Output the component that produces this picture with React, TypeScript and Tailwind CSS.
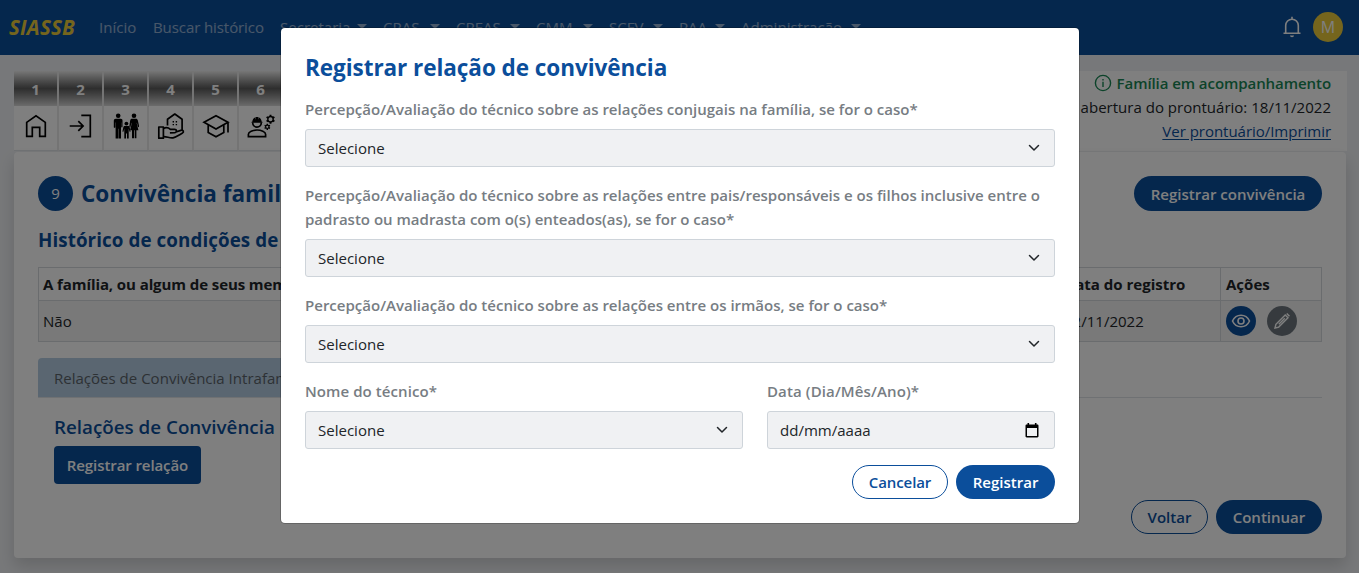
import type { ReactNode } from "react";

const navMenus = [
  { label: "Secretaria", width: "w-[103px]" },
  { label: "CRAS", width: "w-[73px]" },
  { label: "CREAS", width: "w-[80px]" },
  { label: "CMM", width: "w-[73px]" },
  { label: "SCFV", width: "w-[70px]" },
  { label: "PAA", width: "w-[62px]" },
  { label: "Administração", width: "w-[136px]" },
];

function HouseIcon() {
  return (
    <svg width="26" height="26" viewBox="0 0 26 26" fill="none" stroke="#000" strokeWidth="1.7">
      <path d="M3.7 9.4 13 2.9l9.3 6.500v14h-5.600v-9H9.300v9H3.700z" />
    </svg>
  );
}

function EnterIcon() {
  return (
    <svg width="26" height="26" viewBox="0 0 26 26" fill="none" stroke="#000" strokeWidth="1.7">
      <path d="M13.3 2.400h9v21.200h-9M1.700 13h13M10.300 8.200l4.800 4.800-4.800 4.800" />
    </svg>
  );
}

function FamilyIcon() {
  return (
    <svg width="26" height="26" viewBox="0 0 26 26" fill="#000">
      <circle cx="5.2" cy="2.8" r="2.3" />
      <circle cx="21" cy="2.8" r="2.3" />
      <circle cx="13.4" cy="10.6" r="1.9" />
      <path d="M2.8 5.8h5c1.1 0 1.7.8 1.7 1.8v6.2c0 .9-1.3.9-1.3 0V9.4h-.2v16H5.500v-9.600h-.4v9.600H2.600V9.400h-.3v4.800c0 .8-1.500.8-1.500 0V7.700c0-1.100.8-1.900 2-1.900z" />
      <path d="M19 5.800h4c1 0 1.500.6 1.800 1.500l1.400 6c.2.9-.9 1.200-1.200.4l-1.100-3.900-.2.200 1.700 7.300h-2v8h-1.700v-8h-.7v8H19v-8h-1.900L18.800 10l-.2-.2-1.100 4c-.3.9-1.300.500-1.200-.3l.9-6c.2-1.100.8-1.700 1.800-1.700z" />
      <path d="M11.700 13.100h3.500c.8 0 1.300.6 1.500 1.300l.8 3.800c.1.700-.8.9-1 .3l-.8-3v10h-1.700v-5h-1v5h-1.700v-10l-.8 3c-.2.600-1.100.4-1-.3l.8-3.800c.1-.7.700-1.300 1.400-1.300z" />
    </svg>
  );
}

function HandHouseIcon() {
  return (
    <svg width="28" height="28" viewBox="0 0 28 28" fill="none" stroke="#000" strokeWidth="1.7" strokeLinejoin="round">
      <path d="M10.500 13.500V7.200L17.800 2l7.300 5.200v11.300" />
      <path d="M1.800 15h4.600v11.200H1.800z" />
      <path d="M6.400 16.600c2.800-1.600 5-1 7 .8h4.200c2.400 0 2.600 3 .3 3.200l-5 .3M18.800 20l5-1.600c2.700-.7 3.600 1.800 1.400 2.900-3.200 1.800-6.200 3.900-9.200 4.500-3.400.500-6.100-1.300-9.600-1.100" />
      <path d="M15.600 9h1.400v1.400h-1.400zM18.700 9h1.400v1.400h-1.400zM15.600 11.900h1.400v1.400h-1.400zM18.700 11.900h1.400v1.400h-1.400z" fill="#000" stroke="none" />
    </svg>
  );
}

function GraduationIcon() {
  return (
    <svg width="28" height="28" viewBox="0 0 28 28" fill="none" stroke="#000" strokeWidth="1.7">
      <path d="M2 10.200 14 3.800l12 6.400-12 6.900zM26 10.200v10.300M6.200 12.800v7.600L14 24.800l7.800-4.400v-7.600" />
    </svg>
  );
}

function EngineerIcon() {
  return (
    <svg width="30" height="26" viewBox="0 0 30 26" fill="none" stroke="#000" strokeWidth="1.700">
      <path d="M2.400 23.600v-2.400c0-2.400 4.500-4.200 8.600-4.200s8.600 1.800 8.600 4.200v2.400z" />
      <path d="M6.700 9.500c0 6.200 8.600 6.200 8.600 0" />
      <path d="M5.600 9.800V8.700h.700c.1-2 1-3.500 2.600-4.300l.600 2.300V4h3v2.700l.600-2.300c1.600.8 2.500 2.300 2.600 4.300h.7v1.100z" fill="#000" stroke="none" />
      <circle cx="24.500" cy="6.200" r="2.700" strokeWidth="1.400" />
      <path d="M24.500 3.500V1.700M24.500 8.900v1.800M22.200 4.900l-1.600-.9M26.800 7.500l1.600.9M26.800 4.900l1.600-.9M22.200 7.500l-1.600.9" strokeWidth="1.900" />
      <circle cx="21.300" cy="13.800" r="1.700" strokeWidth="1.200" />
      <path d="M21.300 12.100v-1.400M21.300 15.500v1.400M19.800 12.900l-1.200-.6M22.800 14.700l1.200.6M22.800 12.900l1.200-.6M19.800 14.700l-1.200.6" strokeWidth="1.400" />
    </svg>
  );
}

const steps: { n: number; icon: ReactNode }[] = [
  { n: 1, icon: <HouseIcon /> },
  { n: 2, icon: <EnterIcon /> },
  { n: 3, icon: <FamilyIcon /> },
  { n: 4, icon: <HandHouseIcon /> },
  { n: 5, icon: <GraduationIcon /> },
  { n: 6, icon: <EngineerIcon /> },
];

function Chevron() {
  return (
    <svg width="16" height="12" viewBox="0 0 16 12" fill="none" stroke="#212529" strokeWidth="1.500" strokeLinecap="round" strokeLinejoin="round">
      <path d="m3.500 3.500 4.500 4.500 4.500-4.500" />
    </svg>
  );
}

function SelectBox() {
  return (
    <div className="flex h-[38px] items-center justify-between rounded-[3px] border border-[#ced4da] bg-[#f0f1f3] pl-3 pr-3 text-[#212529]">
      <span>Selecione</span>
      <Chevron />
    </div>
  );
}

function Field({ label, children }: { label: ReactNode; children: ReactNode }) {
  return (
    <div className="mb-4">
      <div className="mb-2 whitespace-nowrap font-semibold tracking-[-0.01px] text-[#777d83]">{label}</div>
      {children}
    </div>
  );
}

function Navbar() {
  return (
    <nav className="flex h-[55px] items-center bg-[#0b4e9b] pb-0.5 pl-[9px] pr-4 text-white/55">
      <span className="w-[90px] text-[20.500px] font-bold italic tracking-[0.2px] text-[#eacb3b]">SIASSB</span>
      <span className="w-[54px]">Início</span>
      <span className="w-[127px] whitespace-nowrap tracking-[-0.1px]">Buscar histórico</span>
      {navMenus.map((m) => (
        <span key={m.label} className={"flex shrink-0 items-center " + m.width}>
          <span className="flex-1 whitespace-nowrap">{m.label}</span>
          <span className="mr-4 h-0 w-0 border-x-[5px] border-t-[5px] border-x-transparent border-t-white/55" />
        </span>
      ))}
      <div className="ml-auto flex items-center gap-[9px] pt-px">
        <svg width="24" height="24" viewBox="0 0 24 24" fill="none" stroke="#fff" strokeWidth="1.600">
          <path d="M3.500 18.200h17M5.700 18V10.500a6.300 6.300 0 0 1 12.600 0V18M12 4.200V1.800" />
          <path d="M10 20.500h4c0 2.200-4 2.200-4 0z" fill="#fff" stroke="none" />
        </svg>
        <span className="flex h-[30px] w-[30px] items-center justify-center rounded-full bg-[#eacb3b] text-[16px] text-white">M</span>
      </div>
    </nav>
  );
}

function StepBar() {
  return (
    <div className="flex h-[80px] justify-between bg-white">
      <div className="flex">
        {steps.map((s) => (
          <div key={s.n} className="w-[45px] border-b border-r-2 border-b-[#dee2e6] border-r-[#e8e8e8]">
            <div className="flex h-[35px] items-center justify-center bg-linear-to-b from-[#eeeeee] via-[#5c5c5c] via-50% to-[#d8d8d8] font-bold text-white">
              {s.n}
            </div>
            <div className="flex h-[39px] items-center justify-center">{s.icon}</div>
          </div>
        ))}
      </div>
      <div className="flex flex-col items-end pr-4">
        <div className="flex items-center gap-[5px] font-semibold tracking-[-0.08px] text-[#198754]">
          <svg width="18" height="18" viewBox="0 0 18 18" fill="none" stroke="currentColor" strokeWidth="1.400">
            <circle cx="9" cy="9" r="7.600" />
            <path d="M9 7.800V13M9 5v1.500" />
          </svg>
          <span>Família em acompanhamento</span>
        </div>
        <div className="whitespace-nowrap">Data de abertura do prontuário: 18/11/2022</div>
        <a className="tracking-[-0.04px] text-[#0b4e9b] underline underline-offset-2">Ver prontuário/Imprimir</a>
      </div>
    </div>
  );
}

function HistoryTable() {
  return (
    <table className="mt-[15px] w-full table-fixed border-collapse text-left">
      <colgroup>
        <col />
        <col className="w-[161px]" />
        <col className="w-[101px]" />
      </colgroup>
      <thead>
        <tr className="h-[33px]">
          <th className="border border-[#d5d8dc] px-1 py-0 font-bold tracking-[-0.1px]">A família, ou algum de seus membros</th>
          <th className="border border-[#d5d8dc] px-1 py-0 font-bold">Data do registro</th>
          <th className="border border-[#d5d8dc] px-[5px] py-0 font-bold">Ações</th>
        </tr>
      </thead>
      <tbody>
        <tr className="h-[41px] bg-[#f2f2f2]">
          <td className="border border-[#d5d8dc] px-1 py-0">Não</td>
          <td className="border border-[#d5d8dc] px-1 py-0">22/11/2022</td>
          <td className="border border-[#d5d8dc] px-[5px] py-0">
            <div className="flex gap-[11px]">
              <span className="flex h-[30px] w-[30px] items-center justify-center rounded-full bg-[#0b4e9b]">
                <svg width="20" height="16" viewBox="0 0 20 16" fill="none" stroke="#fff" strokeWidth="1.600">
                  <path d="M1.500 8C3.200 4.300 6.400 2.200 10 2.200S16.800 4.300 18.500 8c-1.700 3.700-4.900 5.800-8.500 5.800S3.200 11.700 1.500 8z" />
                  <circle cx="10" cy="8" r="3" />
                </svg>
              </span>
              <span className="flex h-[30px] w-[30px] items-center justify-center rounded-full bg-[#6c757d]">
                <svg width="18" height="18" viewBox="0 0 18 18" fill="none" stroke="#fff" strokeWidth="1.400">
                  <path d="m2 16 .9-3.700 9.300-9.300 2.800 2.800-9.300 9.300zM11.800 6.200l-6 6" />
                  <path d="m13.200 2 1.100-1L17 3.700l-1.100 1.100z" fill="#fff" stroke="none" />
                </svg>
              </span>
            </div>
          </td>
        </tr>
      </tbody>
    </table>
  );
}

function FamilyCard() {
  return (
    <main className="mt-px h-[406px] rounded bg-white px-6 pt-6 shadow-[0_8px_16px_rgba(0,0,0,0.15)]">
      <div className="flex h-[35px] items-center">
        <span className="flex h-[35px] w-[35px] items-center justify-center rounded-full bg-[#0b4e9b] pb-px text-white">9</span>
        <h1 className="ml-2 text-[22.560px] font-bold text-[#0b4e9b]">Convivência familiar e comunitária</h1>
        <span className="ml-auto flex h-[35px] w-[188px] items-center justify-center rounded-full bg-[#0b4e9b] font-semibold text-white">
          Registrar convivência
        </span>
      </div>
      <h2 className="mt-[17px] h-6 text-[18.800px] font-bold tracking-[0.08px] text-[#0b4e9b]">Histórico de condições de convivência</h2>
      <HistoryTable />
      <div className="mt-4 flex h-10 border-b border-[#dee2e6]">
        <span className="flex items-center rounded-t bg-[#b4cde3] px-4 text-[#5b636a]">
          Relações de Convivência Intrafamiliar
        </span>
      </div>
      <div className="pl-4 pt-[17px]">
        <h3 className="h-6 text-[18.800px] font-semibold text-[#0b4e9b]">Relações de Convivência</h3>
        <span className="mt-[7px] flex h-[38px] w-[147px] items-center justify-center rounded bg-[#0b4e9b] font-semibold tracking-[-0.1px] text-white">
          Registrar relação
        </span>
      </div>
      <div className="mt-4 flex justify-end gap-2">
        <span className="flex h-[34px] w-[77px] items-center justify-center rounded-full border border-[#0b4e9b] font-semibold text-[#0b4e9b]">
          Voltar
        </span>
        <span className="flex h-[34px] w-[106px] items-center justify-center rounded-full bg-[#0b4e9b] font-semibold text-white">
          Continuar
        </span>
      </div>
    </main>
  );
}

function RelationDialog() {
  return (
    <div
      role="dialog"
      className="ml-[281px] mt-7 h-[495px] w-[798px] rounded bg-white px-6 pt-6 shadow-[0_0_0_1px_rgba(0,0,0,0.2)]"
    >
      <h2 className="mb-[14px] h-[31px] text-[22.560px] font-bold leading-[31px] tracking-[-0.07px] text-[#0b4e9b]">
        Registrar relação de convivência
      </h2>
      <Field label="Percepção/Avaliação do técnico sobre as relações conjugais na família, se for o caso*">
        <SelectBox />
      </Field>
      <Field
        label={
          <>
            Percepção/Avaliação do técnico sobre as relações entre pais/responsáveis e os filhos inclusive entre o
            <br />
            padrasto ou madrasta com o(s) enteados(as), se for o caso*
          </>
        }
      >
        <SelectBox />
      </Field>
      <Field label="Percepção/Avaliação do técnico sobre as relações entre os irmãos, se for o caso*">
        <SelectBox />
      </Field>
      <div className="grid grid-cols-[438px_288px] gap-6">
        <Field label={<span className="tracking-[0.06px]">Nome do técnico*</span>}>
          <SelectBox />
        </Field>
        <Field label={<span className="tracking-[0.1px]">Data (Dia/Mês/Ano)*</span>}>
          <div className="flex h-[38px] items-center justify-between rounded-[3px] border border-[#ced4da] bg-[#f0f1f3] pl-3 pr-[15px] text-[#212529]">
            <span>dd/mm/aaaa</span>
            <svg width="14" height="15" viewBox="0 0 14 15" fill="#000">
              <path d="M2.500 0h1.600v1.500h5.800V0h1.600v1.500h.8c.7 0 1.200.500 1.200 1.200v10.600c0 .7-.5 1.200-1.200 1.200H1.700c-.7 0-1.200-.5-1.200-1.200V2.700c0-.7.500-1.200 1.200-1.200h.8zM2 5v8h10V5z" />
            </svg>
          </div>
        </Field>
      </div>
      <div className="flex justify-end gap-2">
        <span className="flex h-[34px] w-24 items-center justify-center rounded-full border border-[#0b4e9b] font-semibold tracking-[-0.1px] text-[#0b4e9b]">
          Cancelar
        </span>
        <span className="flex h-[34px] w-[99px] items-center justify-center rounded-full bg-[#0b4e9b] font-semibold text-white">
          Registrar
        </span>
      </div>
    </div>
  );
}

export default function App() {
  return (
    <div className="relative h-[573px] overflow-hidden bg-[#eff1f4] font-['Open_Sans','Noto_Sans',sans-serif] text-[15.040px] leading-6 text-[#212529]">
      <Navbar />
      <div className="pl-[14px] pr-3 pt-4">
        <StepBar />
        <div className="pr-px">
          <FamilyCard />
        </div>
      </div>
      <div className="absolute inset-0 flex items-start bg-black/50">
        <RelationDialog />
      </div>
    </div>
  );
}
